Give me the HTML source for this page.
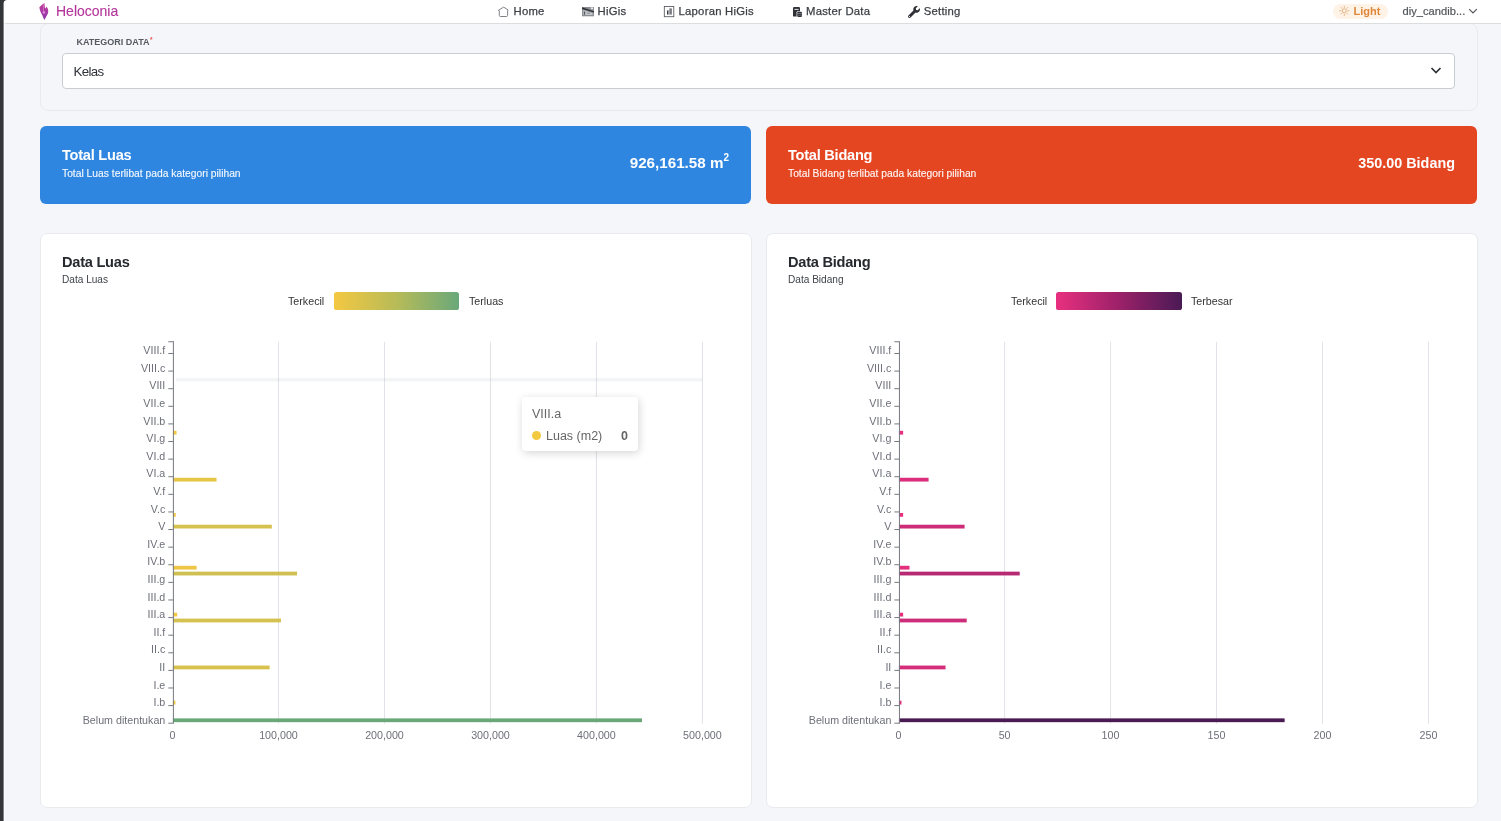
<!DOCTYPE html>
<html><head><meta charset="utf-8"><title>Heloconia</title>
<style>
*{box-sizing:border-box;margin:0;padding:0}
html,body{width:1501px;height:821px;overflow:hidden;background:#f4f6fa;font-family:"Liberation Sans",sans-serif;color:#333}
.abs{position:absolute}
#edge{left:0;top:0;width:3.6px;height:821px;background:#333;z-index:9}
#edgec{z-index:9;left:3.5px;top:0;width:4px;height:4px;background:radial-gradient(circle at 4px 4px, rgba(51,51,51,0) 3.5px, #333 4.1px)}
#nav{left:3px;top:0;width:1498px;height:24px;background:#fff;border-bottom:1px solid #dcdddf;z-index:5}
.z6{z-index:6}
.nv{position:absolute;top:5px;font-size:11.3px;line-height:13px;color:#3b3f45;white-space:nowrap;font-weight:400;letter-spacing:.25px;-webkit-text-stroke:.25px #3b3f45;z-index:6}
#brand{left:56px;top:2.6px;font-size:14px;line-height:16px;color:#b4369a;-webkit-text-stroke:.12px #b4369a;z-index:6}
#card0{left:40px;top:23px;width:1437.5px;height:87.5px;background:#f4f6fa;border:1px solid #e8eaef;border-radius:8px}
#lbl{left:76.5px;top:37.4px;font-size:9px;line-height:11px;font-weight:700;color:#565a61;letter-spacing:0}
#sel{left:62px;top:53px;width:1392.6px;height:35.5px;background:#fff;border:1px solid #c9ccd1;border-radius:4px}
#selv{left:73.4px;top:63.5px;font-size:13.3px;line-height:15px;color:#2e3136;letter-spacing:-.6px}
.stat{position:absolute;top:126px;width:711px;height:78px;border-radius:6px}
.st{position:absolute;left:22px;top:21.4px;font-size:14.6px;line-height:16px;font-weight:700;color:#fff;letter-spacing:-.25px;white-space:nowrap}
.ss{position:absolute;left:22px;top:41.6px;font-size:10.3px;line-height:11px;color:#fff;opacity:.95;white-space:nowrap;-webkit-text-stroke:.12px #fff}
.sv{position:absolute;right:22px;top:29px;font-size:14px;line-height:16px;font-weight:700;color:#fff;white-space:nowrap}
.cc{position:absolute;top:233px;width:711.5px;height:574.9px;background:#fff;border-radius:7px;border:1px solid #e8eaee}
.ct{position:absolute;left:21px;top:20.4px;font-size:14.6px;line-height:16px;font-weight:700;color:#26292e;letter-spacing:-.25px;white-space:nowrap}
.cs{position:absolute;left:21px;top:40px;font-size:10.1px;line-height:11px;color:#3f4349;white-space:nowrap}
.lg{position:absolute;top:295px;font-size:10.7px;line-height:12px;color:#333;white-space:nowrap}
.lgb{position:absolute;top:292px;width:125px;height:18px;border-radius:2.6px}
svg text.al{font-family:"Liberation Sans",sans-serif;font-size:10.7px;fill:#6e7079}
#tip{left:522px;top:397px;width:116px;height:54px;background:#fff;border-radius:4px;box-shadow:1px 2px 9px rgba(0,0,0,.17);color:#666}
#root{position:absolute;left:0;top:0;width:1501px;height:821px;will-change:transform;overflow:hidden}
</style></head><body><div id="root">
<div class="abs" id="nav"></div>
<svg class="abs" style="left:0;top:0;z-index:9" width="10" height="821" viewBox="0 0 10 821"><rect x="3.6" y="20" width="1.3" height="801" fill="#fdfdfe"/><path d="M0 0 H7.2 A3.6 3.6 0 0 0 3.6 3.6 V821 H0 Z" fill="#343538"/></svg>

<div class="abs z6" style="left:38px;top:2px;width:12px;height:19px;background:linear-gradient(180deg,#c53a98,#8a3aad);clip-path:path('M6.4 0.9 C5.2 1.6 3 3.2 1.4 5.2 C1.6 8 2.8 10.6 4.2 13 C4.8 14.8 5.6 16.6 6.5 18 C7.2 16.6 8 15 8.8 13.6 C10 12 10.4 10.2 10.2 8.6 C10 7 9.4 5.6 8.4 4.8 C8.2 5.6 7.6 6.2 7 6.6 C6.8 4.6 6.6 2.6 6.4 0.9Z')"></div>
<svg class="abs z6" style="left:38px;top:2px" width="12" height="19" viewBox="0 0 12 19"><circle cx="5.9" cy="10.4" r="1.2" fill="#f0a8ec" opacity=".8"/><path d="M5.9 2.2 C5.3 4.5 5.2 7 5.6 9.4" stroke="#ee9fe0" stroke-width=".7" fill="none" opacity=".75"/></svg>
<div class="abs" id="brand">Heloconia</div>

<svg class="abs z6" style="left:497px;top:6px" width="13" height="12" viewBox="0 0 13 12"><path d="M1 4.6 L6.6 1.1 L11.5 4.2" fill="none" stroke="#777a80" stroke-width="0.95"/><path d="M2.3 4.6 V9.4 Q2.3 10.5 3.4 10.5 H9.5 Q10.6 10.5 10.6 9.4 V4.4" fill="none" stroke="#777a80" stroke-width="0.95"/></svg>
<div class="nv" style="left:513.5px">Home</div>

<svg class="abs z6" style="left:581px;top:6px" width="14" height="12" viewBox="0 0 14 12"><rect x="1" y="1" width="12" height="9.3" fill="#8b8e93"/><path d="M2.4 4 L11.6 7 V9 H2.4Z" fill="#c3c5c9"/><path d="M1 1.3 L13 5.2 V6.6 L1 3Z" fill="#2e3136"/><rect x="3" y="5.5" width="1.2" height="3.2" fill="#55585d"/><rect x="6" y="6.5" width="3" height="1.4" fill="#9a9da1"/><rect x="9.8" y="1.4" width="2.4" height="1.8" fill="#e6e6e8"/></svg>
<div class="nv" style="left:597.5px">HiGis</div>

<svg class="abs z6" style="left:663px;top:5px" width="12" height="13" viewBox="0 0 12 13"><rect x="1.3" y="1.5" width="9.5" height="10.2" fill="none" stroke="#54575d" stroke-width=".85"/><rect x="4" y="5.4" width="1.5" height="4.2" fill="#3a3d42"/><rect x="6.3" y="3.4" width="2.6" height="6.2" fill="#7a7d82"/></svg>
<div class="nv" style="left:678.5px">Laporan HiGis</div>

<svg class="abs z6" style="left:792px;top:6px" width="12" height="12" viewBox="0 0 12 12"><rect x="1" y="1" width="7" height="9.6" rx="1.2" fill="#2e3136"/><rect x="2.4" y="2.9" width="4.2" height="1" fill="#dcdde0"/><rect x="4.6" y="5.2" width="5.8" height="6.2" rx="1" fill="#fff"/><rect x="5.2" y="5.8" width="4.8" height="5.2" rx="1.2" fill="#2e3136"/><rect x="5.2" y="7.4" width="4.8" height=".7" fill="#9a9da2"/><rect x="5.2" y="9" width="4.8" height=".6" fill="#70737a"/></svg>
<div class="nv" style="left:806px">Master Data</div>

<svg class="abs z6" style="left:908px;top:6px" width="12" height="12" viewBox="0 0 512 512"><path fill="#2e3136" d="M507.73 109.1c-2.24-9.03-13.54-12.09-20.12-5.51l-74.36 74.36-67.88-11.31-11.31-67.88 74.36-74.36c6.62-6.62 3.43-17.9-5.66-20.16-47.38-11.74-99.55.91-136.58 37.93-39.64 39.64-50.55 97.1-34.05 147.2L18.74 402.76c-24.99 24.99-24.99 65.51 0 90.5 24.99 24.99 65.51 24.99 90.5 0l213.21-213.21c50.12 16.71 107.47 5.68 147.37-34.22 37.07-37.07 49.7-89.32 37.91-136.73zM64 472c-13.25 0-24-10.75-24-24 0-13.26 10.75-24 24-24s24 10.74 24 24c0 13.25-10.75 24-24 24z"/></svg>
<div class="nv" style="left:923.7px">Setting</div>

<div class="abs z6" style="left:1333px;top:4px;width:54.5px;height:15px;border-radius:8px;background:#fef3e6"></div>
<svg class="abs z6" style="left:1338px;top:4px" width="13" height="14" viewBox="0 0 13 14"><g stroke="#e3b383" stroke-width="1" fill="none"><circle cx="6.3" cy="6.8" r="2"/><path d="M6.3 1.8v2M6.3 9.8v2M1.3 6.8h2M9.3 6.8h2M2.8 3.3l1.4 1.4M8.4 8.9l1.4 1.4M9.8 3.3l-1.4 1.4M4.2 8.9l-1.4 1.4"/></g></svg>
<div class="nv" style="left:1353.6px;top:4.5px;color:#e0873a;font-weight:700;font-size:11px;letter-spacing:0;-webkit-text-stroke:0">Light</div>
<div class="nv" style="left:1402.5px;top:4.5px;color:#50545a;font-size:11.1px;letter-spacing:0.04px;-webkit-text-stroke:.2px #50545a">diy_candib...</div>
<svg class="abs z6" style="left:1468px;top:8px" width="10" height="7" viewBox="0 0 10 7"><path d="M1.2 1.2 L5 5 L8.8 1.2" fill="none" stroke="#50545a" stroke-width="1.2"/></svg>

<div class="abs" id="card0"></div>
<div class="abs" id="lbl">KATEGORI DATA<span style="color:#e8504a;font-size:6.5px;position:relative;top:-3.5px;left:.5px">*</span></div>
<div class="abs" id="sel"></div>
<div class="abs" id="selv">Kelas</div>
<svg class="abs" style="left:1430.3px;top:66.4px" width="12" height="9" viewBox="0 0 12 9"><path d="M1.5 2 L6 6.5 L10.5 2" fill="none" stroke="#2e3136" stroke-width="1.7"/></svg>

<div class="stat" style="left:40px;background:#2f86e1"><div class="st">Total Luas</div><div class="ss">Total Luas terlibat pada kategori pilihan</div><div class="sv" style="font-size:15.2px">926,161.58 m<sup style="font-size:10px;line-height:0;position:relative;top:-1px">2</sup></div></div>
<div class="stat" style="left:766px;background:#e44622"><div class="st">Total Bidang</div><div class="ss">Total Bidang terlibat pada kategori pilihan</div><div class="sv" style="font-size:14.4px">350.00 Bidang</div></div>

<div class="cc" style="left:40px"><div class="ct">Data Luas</div><div class="cs">Data Luas</div></div>
<div class="cc" style="left:766px"><div class="ct">Data Bidang</div><div class="cs">Data Bidang</div></div>

<div class="lg" style="left:288px">Terkecil</div>
<div class="lgb" style="left:333.7px;width:125.6px;background:linear-gradient(90deg,#f4c842,#b7bb58 50%,#6aa87a)"></div>
<div class="lg" style="left:469px">Terluas</div>
<div class="lg" style="left:1011px">Terkecil</div>
<div class="lgb" style="left:1056px;width:125.8px;background:linear-gradient(90deg,#e8307f,#9c2169 50%,#4a1a55)"></div>
<div class="lg" style="left:1191px">Terbesar</div>

<svg class="abs" style="left:0;top:0" width="1501" height="821" viewBox="0 0 1501 821">
<rect x="278.02" y="341.75" width="1" height="381.95" fill="#e1e3e8"/>
<rect x="383.99" y="341.75" width="1" height="381.95" fill="#e1e3e8"/>
<rect x="489.96" y="341.75" width="1" height="381.95" fill="#e1e3e8"/>
<rect x="595.93" y="341.75" width="1" height="381.95" fill="#e1e3e8"/>
<rect x="701.90" y="341.75" width="1" height="381.95" fill="#e1e3e8"/>
<rect x="175.80" y="378.09" width="526.60" height="3.4" fill="rgba(140,150,170,0.10)"/>
<rect x="172.90" y="718.37" width="469.10" height="3.8" fill="#6aa87a"/>
<rect x="172.90" y="700.76" width="2.55" height="3.8" fill="#f4c842"/>
<rect x="172.90" y="665.55" width="96.70" height="3.8" fill="#d8c14e"/>
<rect x="172.90" y="618.60" width="108.04" height="3.8" fill="#d4c14f"/>
<rect x="172.90" y="612.73" width="4.29" height="3.8" fill="#f3c843"/>
<rect x="172.90" y="571.65" width="124.15" height="3.8" fill="#cfc051"/>
<rect x="172.90" y="565.79" width="23.69" height="3.8" fill="#edc645"/>
<rect x="172.90" y="524.71" width="98.93" height="3.8" fill="#d7c14e"/>
<rect x="172.90" y="512.97" width="2.81" height="3.8" fill="#f3c842"/>
<rect x="172.90" y="477.76" width="43.61" height="3.8" fill="#e7c547"/>
<rect x="172.90" y="430.81" width="3.66" height="3.8" fill="#f3c842"/>
<rect x="172.90" y="341.25" width="1" height="382.45" fill="#777981"/>
<rect x="168.30" y="722.70" width="5" height="1" fill="#777981"/>
<rect x="168.30" y="705.09" width="5" height="1" fill="#777981"/>
<rect x="168.30" y="687.49" width="5" height="1" fill="#777981"/>
<rect x="168.30" y="669.88" width="5" height="1" fill="#777981"/>
<rect x="168.30" y="652.28" width="5" height="1" fill="#777981"/>
<rect x="168.30" y="634.67" width="5" height="1" fill="#777981"/>
<rect x="168.30" y="617.07" width="5" height="1" fill="#777981"/>
<rect x="168.30" y="599.46" width="5" height="1" fill="#777981"/>
<rect x="168.30" y="581.86" width="5" height="1" fill="#777981"/>
<rect x="168.30" y="564.25" width="5" height="1" fill="#777981"/>
<rect x="168.30" y="546.65" width="5" height="1" fill="#777981"/>
<rect x="168.30" y="529.04" width="5" height="1" fill="#777981"/>
<rect x="168.30" y="511.44" width="5" height="1" fill="#777981"/>
<rect x="168.30" y="493.83" width="5" height="1" fill="#777981"/>
<rect x="168.30" y="476.22" width="5" height="1" fill="#777981"/>
<rect x="168.30" y="458.62" width="5" height="1" fill="#777981"/>
<rect x="168.30" y="441.01" width="5" height="1" fill="#777981"/>
<rect x="168.30" y="423.41" width="5" height="1" fill="#777981"/>
<rect x="168.30" y="405.80" width="5" height="1" fill="#777981"/>
<rect x="168.30" y="388.20" width="5" height="1" fill="#777981"/>
<rect x="168.30" y="370.59" width="5" height="1" fill="#777981"/>
<rect x="168.30" y="352.99" width="5" height="1" fill="#777981"/>
<rect x="168.30" y="341.25" width="5" height="1" fill="#777981"/>
<text x="165.30" y="723.90" text-anchor="end" class="al">Belum ditentukan</text>
<text x="165.30" y="706.29" text-anchor="end" class="al">I.b</text>
<text x="165.30" y="688.69" text-anchor="end" class="al">I.e</text>
<text x="165.30" y="671.08" text-anchor="end" class="al">II</text>
<text x="165.30" y="653.48" text-anchor="end" class="al">II.c</text>
<text x="165.30" y="635.87" text-anchor="end" class="al">II.f</text>
<text x="165.30" y="618.27" text-anchor="end" class="al">III.a</text>
<text x="165.30" y="600.66" text-anchor="end" class="al">III.d</text>
<text x="165.30" y="583.06" text-anchor="end" class="al">III.g</text>
<text x="165.30" y="565.45" text-anchor="end" class="al">IV.b</text>
<text x="165.30" y="547.85" text-anchor="end" class="al">IV.e</text>
<text x="165.30" y="530.24" text-anchor="end" class="al">V</text>
<text x="165.30" y="512.64" text-anchor="end" class="al">V.c</text>
<text x="165.30" y="495.03" text-anchor="end" class="al">V.f</text>
<text x="165.30" y="477.42" text-anchor="end" class="al">VI.a</text>
<text x="165.30" y="459.82" text-anchor="end" class="al">VI.d</text>
<text x="165.30" y="442.21" text-anchor="end" class="al">VI.g</text>
<text x="165.30" y="424.61" text-anchor="end" class="al">VII.b</text>
<text x="165.30" y="407.00" text-anchor="end" class="al">VII.e</text>
<text x="165.30" y="389.40" text-anchor="end" class="al">VIII</text>
<text x="165.30" y="371.79" text-anchor="end" class="al">VIII.c</text>
<text x="165.30" y="354.19" text-anchor="end" class="al">VIII.f</text>
<text x="172.6" y="738.9" text-anchor="middle" class="al">0</text>
<text x="278.5" y="738.9" text-anchor="middle" class="al">100,000</text>
<text x="384.5" y="738.9" text-anchor="middle" class="al">200,000</text>
<text x="490.5" y="738.9" text-anchor="middle" class="al">300,000</text>
<text x="596.4" y="738.9" text-anchor="middle" class="al">400,000</text>
<text x="702.4" y="738.9" text-anchor="middle" class="al">500,000</text>
<rect x="1004.07" y="341.75" width="1" height="381.95" fill="#e1e3e8"/>
<rect x="1110.04" y="341.75" width="1" height="381.95" fill="#e1e3e8"/>
<rect x="1216.01" y="341.75" width="1" height="381.95" fill="#e1e3e8"/>
<rect x="1321.98" y="341.75" width="1" height="381.95" fill="#e1e3e8"/>
<rect x="1427.95" y="341.75" width="1" height="381.95" fill="#e1e3e8"/>
<rect x="898.95" y="718.37" width="385.68" height="3.8" fill="#4a1a55"/>
<rect x="898.95" y="700.76" width="2.55" height="3.8" fill="#e7307f"/>
<rect x="898.95" y="665.55" width="46.58" height="3.8" fill="#d52d7a"/>
<rect x="898.95" y="618.60" width="67.77" height="3.8" fill="#cc2c78"/>
<rect x="898.95" y="612.73" width="4.19" height="3.8" fill="#e6307f"/>
<rect x="898.95" y="571.65" width="120.76" height="3.8" fill="#b72972"/>
<rect x="898.95" y="565.79" width="10.55" height="3.8" fill="#e42f7e"/>
<rect x="898.95" y="524.71" width="65.65" height="3.8" fill="#cd2c78"/>
<rect x="898.95" y="512.97" width="4.19" height="3.8" fill="#e6307f"/>
<rect x="898.95" y="477.76" width="29.62" height="3.8" fill="#dc2e7c"/>
<rect x="898.95" y="430.81" width="4.19" height="3.8" fill="#e6307f"/>
<rect x="898.95" y="341.25" width="1" height="382.45" fill="#777981"/>
<rect x="894.35" y="722.70" width="5" height="1" fill="#777981"/>
<rect x="894.35" y="705.09" width="5" height="1" fill="#777981"/>
<rect x="894.35" y="687.49" width="5" height="1" fill="#777981"/>
<rect x="894.35" y="669.88" width="5" height="1" fill="#777981"/>
<rect x="894.35" y="652.28" width="5" height="1" fill="#777981"/>
<rect x="894.35" y="634.67" width="5" height="1" fill="#777981"/>
<rect x="894.35" y="617.07" width="5" height="1" fill="#777981"/>
<rect x="894.35" y="599.46" width="5" height="1" fill="#777981"/>
<rect x="894.35" y="581.86" width="5" height="1" fill="#777981"/>
<rect x="894.35" y="564.25" width="5" height="1" fill="#777981"/>
<rect x="894.35" y="546.65" width="5" height="1" fill="#777981"/>
<rect x="894.35" y="529.04" width="5" height="1" fill="#777981"/>
<rect x="894.35" y="511.44" width="5" height="1" fill="#777981"/>
<rect x="894.35" y="493.83" width="5" height="1" fill="#777981"/>
<rect x="894.35" y="476.22" width="5" height="1" fill="#777981"/>
<rect x="894.35" y="458.62" width="5" height="1" fill="#777981"/>
<rect x="894.35" y="441.01" width="5" height="1" fill="#777981"/>
<rect x="894.35" y="423.41" width="5" height="1" fill="#777981"/>
<rect x="894.35" y="405.80" width="5" height="1" fill="#777981"/>
<rect x="894.35" y="388.20" width="5" height="1" fill="#777981"/>
<rect x="894.35" y="370.59" width="5" height="1" fill="#777981"/>
<rect x="894.35" y="352.99" width="5" height="1" fill="#777981"/>
<rect x="894.35" y="341.25" width="5" height="1" fill="#777981"/>
<text x="891.35" y="723.90" text-anchor="end" class="al">Belum ditentukan</text>
<text x="891.35" y="706.29" text-anchor="end" class="al">I.b</text>
<text x="891.35" y="688.69" text-anchor="end" class="al">I.e</text>
<text x="891.35" y="671.08" text-anchor="end" class="al">II</text>
<text x="891.35" y="653.48" text-anchor="end" class="al">II.c</text>
<text x="891.35" y="635.87" text-anchor="end" class="al">II.f</text>
<text x="891.35" y="618.27" text-anchor="end" class="al">III.a</text>
<text x="891.35" y="600.66" text-anchor="end" class="al">III.d</text>
<text x="891.35" y="583.06" text-anchor="end" class="al">III.g</text>
<text x="891.35" y="565.45" text-anchor="end" class="al">IV.b</text>
<text x="891.35" y="547.85" text-anchor="end" class="al">IV.e</text>
<text x="891.35" y="530.24" text-anchor="end" class="al">V</text>
<text x="891.35" y="512.64" text-anchor="end" class="al">V.c</text>
<text x="891.35" y="495.03" text-anchor="end" class="al">V.f</text>
<text x="891.35" y="477.42" text-anchor="end" class="al">VI.a</text>
<text x="891.35" y="459.82" text-anchor="end" class="al">VI.d</text>
<text x="891.35" y="442.21" text-anchor="end" class="al">VI.g</text>
<text x="891.35" y="424.61" text-anchor="end" class="al">VII.b</text>
<text x="891.35" y="407.00" text-anchor="end" class="al">VII.e</text>
<text x="891.35" y="389.40" text-anchor="end" class="al">VIII</text>
<text x="891.35" y="371.79" text-anchor="end" class="al">VIII.c</text>
<text x="891.35" y="354.19" text-anchor="end" class="al">VIII.f</text>
<text x="898.6" y="738.9" text-anchor="middle" class="al">0</text>
<text x="1004.6" y="738.9" text-anchor="middle" class="al">50</text>
<text x="1110.5" y="738.9" text-anchor="middle" class="al">100</text>
<text x="1216.5" y="738.9" text-anchor="middle" class="al">150</text>
<text x="1322.5" y="738.9" text-anchor="middle" class="al">200</text>
<text x="1428.5" y="738.9" text-anchor="middle" class="al">250</text>
</svg>

<div class="abs" id="tip">
 <div class="abs" style="left:10px;top:10px;font-size:12.5px;line-height:14px;color:#666">VIII.a</div>
 <div class="abs" style="left:10px;top:33.7px;width:9px;height:9px;border-radius:50%;background:#f3ca3f"></div>
 <div class="abs" style="left:24px;top:31.5px;font-size:12.5px;line-height:14px;color:#666">Luas (m2)</div>
 <div class="abs" style="right:10px;top:31.5px;font-size:12.5px;line-height:14px;color:#666;font-weight:700">0</div>
</div>
</div></body></html>
